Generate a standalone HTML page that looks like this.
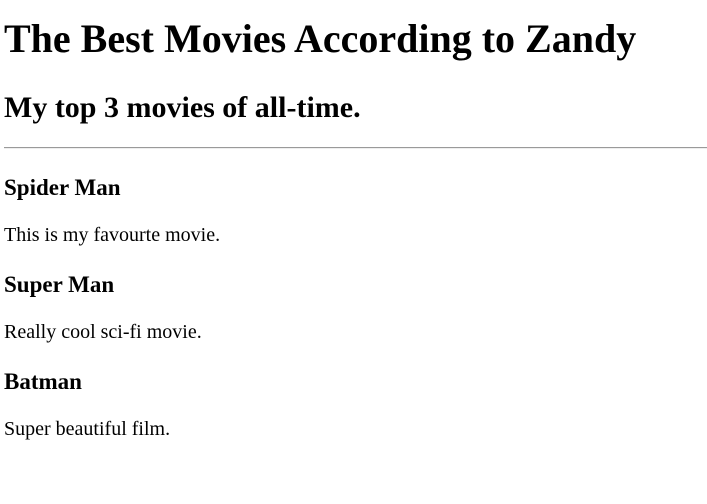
<!DOCTYPE html>
<html><head><style>
body{margin:0;width:707px;height:504px;background:#fff;color:#000;font-family:"Liberation Serif",serif;position:relative;overflow:hidden}
div{position:absolute;left:4px;line-height:1;white-space:nowrap}
.h1{font-size:40px;font-weight:bold}
.h2{font-size:30px;font-weight:bold}
.h4{font-size:23px;font-weight:bold}
.p{font-size:20px}
.hr{left:4px;right:0;top:147px;height:0;border-top:1px solid #9a9a9a;border-bottom:1px solid #eee}
</style></head><body>
<div class="h1" style="top:19px">The Best Movies According to Zandy</div>
<div class="h2" style="top:93px">My top 3 movies of all-time.</div>
<div class="hr"></div>
<div class="h4" style="top:176px">Spider Man</div>
<div class="p" style="top:225px">This is my favourte movie.</div>
<div class="h4" style="top:273px">Super Man</div>
<div class="p" style="top:322px">Really cool sci-fi movie.</div>
<div class="h4" style="top:370px">Batman</div>
<div class="p" style="top:419px">Super beautiful film.</div>
</body></html>
